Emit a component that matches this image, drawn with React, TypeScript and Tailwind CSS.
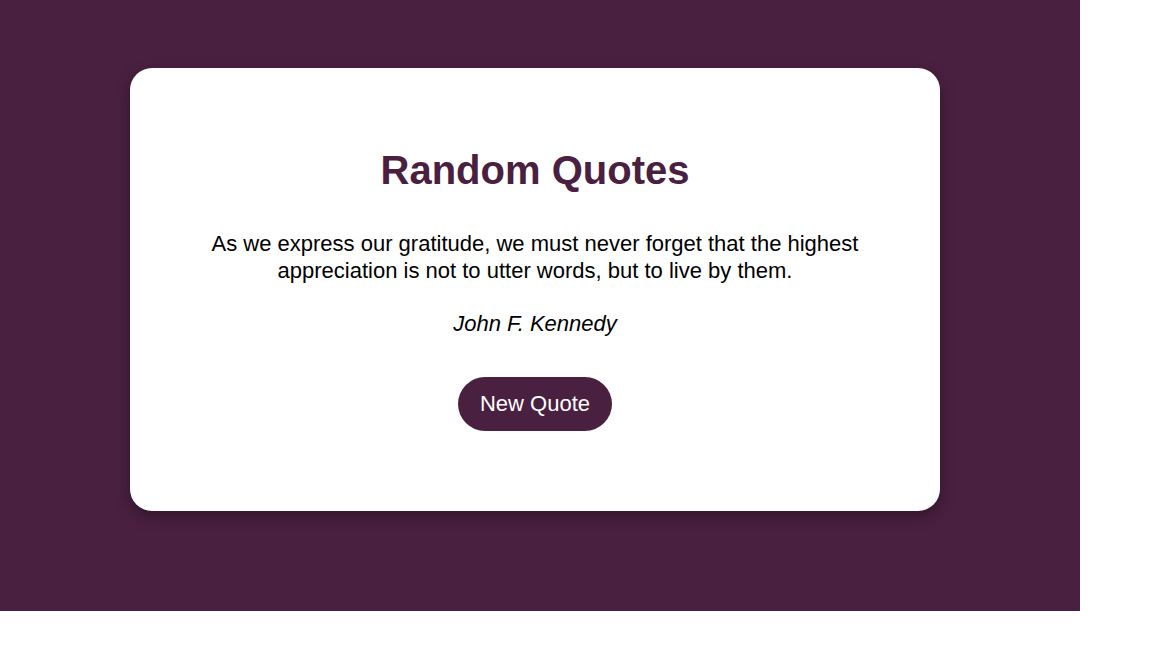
export default function App() {
  return (
    <div className="w-[1080px] h-[611px] bg-[#4a2040] pt-[68px] pl-[130px] font-['Liberation_Sans',Arial,sans-serif]">
      {/* Quote card */}
      <div className="w-[810px] h-[443px] bg-white rounded-[22px] shadow-[0_5px_15px_rgba(0,0,0,0.35)] px-[80px] pt-[79px] flex flex-col items-center text-center">
        <h1 className="text-[40px] leading-[46px] font-bold text-[#4a2040]">Random Quotes</h1>

        <p className="mt-[38px] text-[22px] leading-[26.5px] text-black">
          As we express our gratitude, we must never forget that the highest appreciation is not to utter words, but to live by them.
        </p>

        <p className="mt-[27px] text-[22px] leading-[26.5px] italic text-black">John F. Kennedy</p>

        <button className="mt-[39px] h-[54px] px-[22px] rounded-full bg-[#4a2040] text-white text-[22px] leading-[26px]">
          New Quote
        </button>
      </div>
    </div>
  );
}
